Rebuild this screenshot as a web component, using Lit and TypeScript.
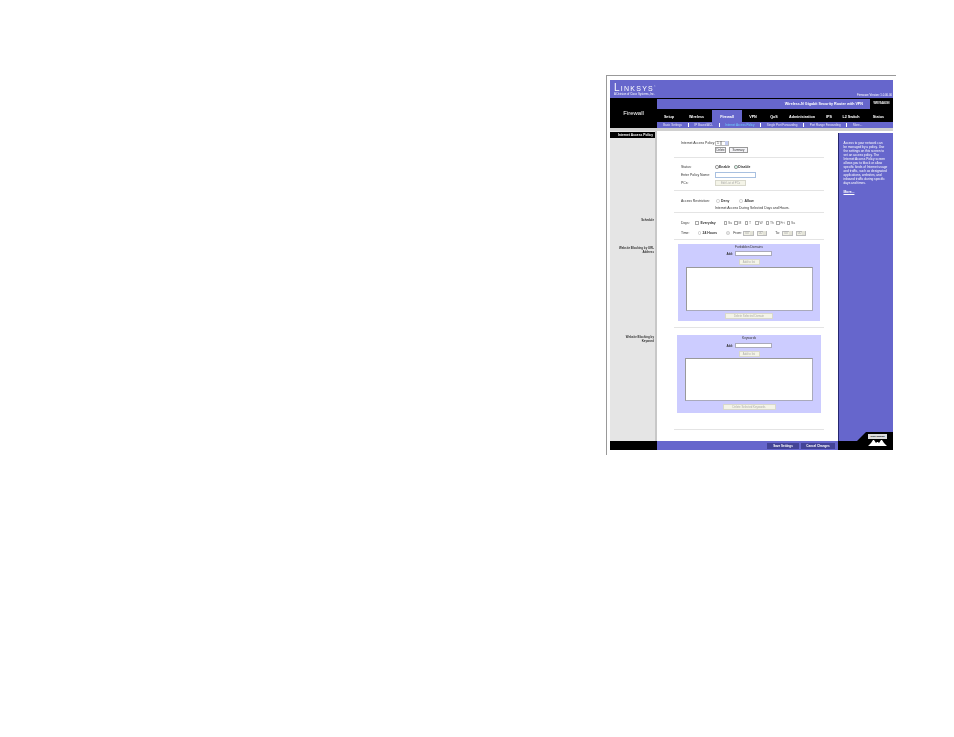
import { LitElement, html, css } from "lit";
import { customElement } from "lit/decorators.js";

const TABS = ["Setup", "Wireless", "Firewall", "VPN", "QoS", "Administration", "IPS", "L2 Switch", "Status"];
const SUBS = ["Basic Settings", "IP Based ACL", "Internet Access Policy", "Single Port Forwarding", "Port Range Forwarding", "More..."];
const DAYS = ["Su", "M", "T", "W", "Th", "Fri", "Sa"];
const HELP = [
  "Access to your network can",
  "be managed by a policy. Use",
  "the settings on this screen to",
  "set an access policy. The",
  "Internet Access Policy screen",
  "allows you to block or allow",
  "specific kinds of Internet usage",
  "and traffic, such as designated",
  "applications, websites, and",
  "inbound traffic during specific",
  "days and times.",
];

@customElement("app-root")
export class AppRoot extends LitElement {
  static styles = css`
    :host { display: block; width: 954px; height: 737px; background: #fff; overflow: hidden;
      font-family: "Liberation Sans", Arial, sans-serif; font-size: 3.4px; line-height: 4px; color: #333; }
    * { box-sizing: border-box; }
    .frame { margin: 75px 0 0 606px; width: 290px; height: 380px; border-top: 1px solid #999; border-left: 1px solid #999; padding: 4px 0 0 3px; }
    .page { width: 283px; height: 370px; display: flex; flex-direction: column; filter: blur(.3px); white-space: nowrap; }
    .head { height: 18px; background: #6666cc; display: flex; justify-content: space-between; color: #fff; padding: 2.5px 1px 0 4px; }
    .logo { display: flex; flex-direction: column; }
    .brand { font-size: 10px; line-height: 10px; letter-spacing: 1.25px; font-variant: small-caps; }
    .brand sup { font-size: 2px; line-height: 0; }
    .tag { font-size: 2.8px; line-height: 3px; }
    .fw { align-self: flex-end; font-size: 2.8px; margin-bottom: 1px; }
    .top { height: 30px; display: grid; grid-template-columns: 47px 236px; background: #000; }
    .section { color: #fff; font-size: 6px; display: flex; align-items: center; justify-content: center; line-height: 6px; }
    .nav { display: flex; flex-direction: column; }
    .title { height: 11px; margin-top: 1px; background: #6666cc; border-bottom: 1px solid #000; display: flex; justify-content: flex-end; color: #fff; font-weight: 700; font-size: 3.7px; align-items: center; }
    .title span { margin-right: 7px; }
    .title b { width: 23px; height: 10px; background: #000; display: flex; align-items: center; justify-content: center; font-size: 2.7px; }
    .tabs { height: 12px; display: grid; grid-template-columns: 24px 31px 30px 22px 20px 36px 18px 26px 29px; color: #fff; font-weight: 700; font-size: 3.7px; }
    .tabs div { display: flex; align-items: center; justify-content: center; padding-top: 1px; }
    .tabs .on { background: #6666cc; }
    .subs { height: 6px; background: #6666cc; color: #e6e6f6; font-size: 3px; display: flex; align-items: center; padding-left: 6px; gap: 5.8px; }
    .subs i { width: .7px; height: 4px; background: #fff; }
    .subs .on { color: #6fd0ff; }
    .rule { height: 3px; background: #d0d0d0; }
    .main { flex: 1; display: grid; grid-template-columns: 47px 181px 55px; min-height: 0; }
    .labels { background: #e5e5e5; border-right: 2px solid #c8c8c8; font-weight: 700; font-size: 2.9px; text-align: right; padding: 1px 1px 0 0; }
    .labels .bar { display: block; background: #000; color: #fff; height: 6px; line-height: 6px; margin: 0 -1px 0 0; padding-right: 2px; font-size: 3.3px; }
    .labels p { margin: 0; }
    .lsched { margin-top: 80px !important; }
    .lurl { margin-top: 24px !important; }
    .lkey { margin-top: 81px !important; }
    .content { background: #fff; padding: 0 14px 0 17px; }
    .group { border-bottom: 1px solid #e4e4e4; }
    .g1 { height: 27px; padding: 9px 0 0 7px; }
    .g2 { height: 33px; padding: 5px 0 0 7px; }
    .g3 { height: 22px; padding: 6px 0 0 7px; }
    .g4 { height: 27px; padding: 6px 0 0 7px; }
    .row { display: flex; align-items: center; height: 8px; }
    .row .k { width: 34px; flex: none; }
    .r6 { height: 6px; }
    .r7 { height: 7px; }
    .btn { border: .5px solid #999; background: #f5f5ef; color: #666; font-size: 2.8px; height: 6px; display: inline-flex; align-items: center; justify-content: center; }
    .btn.dim { border-color: #d8d8cc; color: #aaa; background: #f4f4e8; }
    .btn.dark { color: #333; background: #f4f4f8; }
    .w11 { width: 11px; }
    .w19 { width: 19px; margin-left: 3px; }
    .w21 { width: 21px; margin-top: 2px; }
    .w31 { width: 31px; }
    .w48 { width: 48px; margin-top: 2px; }
    .w53 { width: 53px; margin-top: 3px; }
    .sel { width: 14px; height: 5px; border: .5px solid #bbb; display: flex; justify-content: space-between; align-items: center; padding-left: 1px; background: #fff; }
    .sel u { width: 3.5px; height: 4px; background: #c5cef0; text-decoration: none; }
    .sel.off { width: 10.5px; background: #f1f1e6; color: #aaa; }
    .sel.off u { background: #e3e3d8; width: 3px; }
    .sel.gap { margin-left: 3px; }
    .radio { width: 3.5px; height: 3.5px; border: .5px solid #888; border-radius: 50%; margin-right: .6px; flex: none; background: #fff; }
    .radio.dim { border-color: #ccc; }
    .radio.off { border-color: #ccc; background: #e8e8e8; }
    .radio.sp { margin-left: 4px; background: #dfe; }
    .radio.sp2 { margin-left: 10px; }
    .chk { width: 3.5px; height: 3.5px; border: .5px solid #aaa; margin-right: 1px; flex: none; background: #fff; }
    .day { display: flex; align-items: center; width: 10.5px; color: #666; }
    .text { border: .6px solid #a8c0e0; background: #fff; }
    .name { width: 41px; height: 6px; }
    strong { font-weight: 700; }
    .every { width: 23px; margin-left: 1px; }
    .h24 { width: 23.5px; margin-left: 1px; }
    .from { margin: 0 2px 0 3px; width: 8px; }
    .to { margin: 0 2px 0 8px; width: 5px; }
    .k14 { width: 14px !important; }
    .k16 { width: 16.5px !important; }
    .k36 { width: 35px !important; }
    .mb1 { margin-bottom: 2px; }
    .ml1 { margin-left: 1px; }
    .pad { display: flex; flex-direction: column; align-items: center; background: #ccccff; }
    .pad .ttl { height: 6px; line-height: 6px; font-size: 3.2px; }
    .pad .line { display: flex; align-items: center; height: 7px; gap: 1.5px; font-weight: 700; font-size: 2.9px; }
    .pad .line .text { width: 37px; height: 5px; border-color: #aab; }
    .mt1 { margin-top: 1px; }
    .pad .area { background: #fff; border: 1px solid #aab; border-top-color: #999; border-left-color: #999; }
    .a1 { width: 127px; height: 44px; margin-top: 2px; }
    .a2 { width: 128px; height: 43px; margin-top: 1px; }
    .wrap1 { height: 88px; padding: 4px 4px 0 4px; }
    .wrap1 .pad { height: 77px; }
    .wrap2 { height: 102px; padding: 7px 3px 0 3px; border-bottom: 1px solid #e4e4e4; }
    .wrap2 .pad { height: 78px; }
    .side { background: #6666cc; border-left: 1px solid #26266e; color: #fff; margin-top: 2px; display: flex; flex-direction: column; padding: 8px 0 0 4.5px; font-size: 3.2px; line-height: 4px; position: relative; }
    .side p { margin: 0; }
    .more { margin-top: 4.5px !important; font-weight: 700; text-decoration: underline; text-decoration-thickness: .4px; font-size: 3.4px; }
    .corner { position: absolute; right: 0; bottom: 0; }
    .foot { height: 9px; display: grid; grid-template-columns: 47px 181px 55px; background: #000; }
    .foot .mid { background: #6666cc; display: flex; justify-content: flex-end; align-items: center; gap: 2px; padding-right: 3px; }
    .foot .mid span { background: #434396; color: #fff; font-weight: 700; font-size: 3px; height: 6px; display: flex; align-items: center; justify-content: center; }
    .s32 { width: 32px; }
    .s34 { width: 34px; }
    .fr { position: relative; }
    .cisco { position: absolute; right: 6px; bottom: 4px; width: 19px; height: 7px; }
    .ctext { position: absolute; right: 6px; bottom: 11px; width: 19px; height: 5px; background: #ddd; color: #000; font-size: 2px; line-height: 4px; text-align: center; font-weight: 700; }
  `;

  render() {
    return html`<div class="frame"><div class="page">
      <div class="head">
        <div class="logo"><div class="brand">Linksys<sup>®</sup></div><div class="tag">A Division of Cisco Systems, Inc.</div></div>
        <div class="fw">Firmware Version: 1.0.00.00</div>
      </div>
      <div class="top">
        <div class="section">Firewall</div>
        <div class="nav">
          <div class="title"><span>Wireless-N Gigabit Security Router with VPN</span><b>WRVS4400N</b></div>
          <div class="tabs">${TABS.map((t) => html`<div class=${t === "Firewall" ? "on" : ""}>${t}</div>`)}</div>
          <div class="subs">${SUBS.map((s, i) => html`${i ? html`<i></i>` : ""}<span class=${i === 2 ? "on" : ""}>${s}</span>`)}</div>
        </div>
      </div>
      <div class="rule"></div>
      <div class="main">
        <div class="labels">
          <span class="bar">Internet Access Policy</span>
          <p class="lsched">Schedule</p>
          <p class="lurl">Website Blocking by URL<br />Address</p>
          <p class="lkey">Website Blocking by<br />Keyword</p>
        </div>
        <div class="content">
          <div class="group g1">
            <div class="row r6"><span class="k">Internet Access Policy:</span><span class="sel">1 () <u></u></span></div>
            <div class="row r7"><span class="k"></span><span class="btn dark w11">Delete</span><span class="btn dark w19">Summary</span></div>
          </div>
          <div class="group g2">
            <div class="row"><span class="k">Status:</span><span class="radio"></span><strong>Enable</strong><span class="radio sp"></span><strong>Disable</strong></div>
            <div class="row"><span class="k">Enter Policy Name:</span><span class="text name"></span></div>
            <div class="row"><span class="k">PCs:</span><span class="btn dim w31">Edit List of PCs</span></div>
          </div>
          <div class="group g3">
            <div class="row"><span class="k k36">Access Restriction:</span><span class="radio dim"></span><strong class="ml1">Deny</strong><span class="radio dim sp2"></span><strong class="ml1">Allow</strong></div>
            <div class="row r6"><span class="k"></span>Internet Access During Selected Days and Hours.</div>
          </div>
          <div class="group g4">
            <div class="row mb1"><span class="k k14">Days:</span><span class="chk"></span><strong class="every">Everyday</strong>${DAYS.map((d) => html`<span class="day"><span class="chk"></span>${d}</span>`)}</div>
            <div class="row"><span class="k k16">Time:</span><span class="radio dim"></span><strong class="h24">24 Hours</strong><span class="radio off"></span><span class="from">From:</span><span class="sel off">00<u></u></span><span class="sel off gap">00<u></u></span><span class="to">To:</span><span class="sel off">00<u></u></span><span class="sel off gap">00<u></u></span></div>
          </div>
          <div class="group wrap1">
            <div class="pad">
              <div class="ttl">Forbidden Domains</div>
              <div class="line">Add:<span class="text"></span></div>
              <span class="btn dim w21">Add to list</span>
              <div class="area a1"></div>
              <span class="btn dim w48">Delete Selected Domain</span>
            </div>
          </div>
          <div class="wrap2">
            <div class="pad">
              <div class="ttl">Keywords</div>
              <div class="line mt1">Add:<span class="text"></span></div>
              <span class="btn dim w21">Add to list</span>
              <div class="area a2"></div>
              <span class="btn dim w53">Delete Selected Keywords</span>
            </div>
          </div>
        </div>
        <div class="side">
          <p>${HELP.map((l) => html`${l}<br />`)}</p>
          <p class="more">More...</p>
          <svg class="corner" width="36" height="9" viewBox="0 0 36 9"><polygon points="0,9 9,0 36,0 36,9" fill="#000" /></svg>
        </div>
      </div>
      <div class="foot">
        <div></div>
        <div class="mid"><span class="s32">Save Settings</span><span class="s34">Cancel Changes</span></div>
        <div class="fr">
          <div class="ctext">Cisco Systems</div>
          <svg class="cisco" viewBox="0 0 19 7"><path fill="#fff" d="M0 7 L3 4 L5 1 L6 1 L8 4 L9 3 L10 3 L11 4 L13 1 L14 1 L16 4 L19 7 Z" /></svg>
        </div>
      </div>
    </div></div>`;
  }
}
